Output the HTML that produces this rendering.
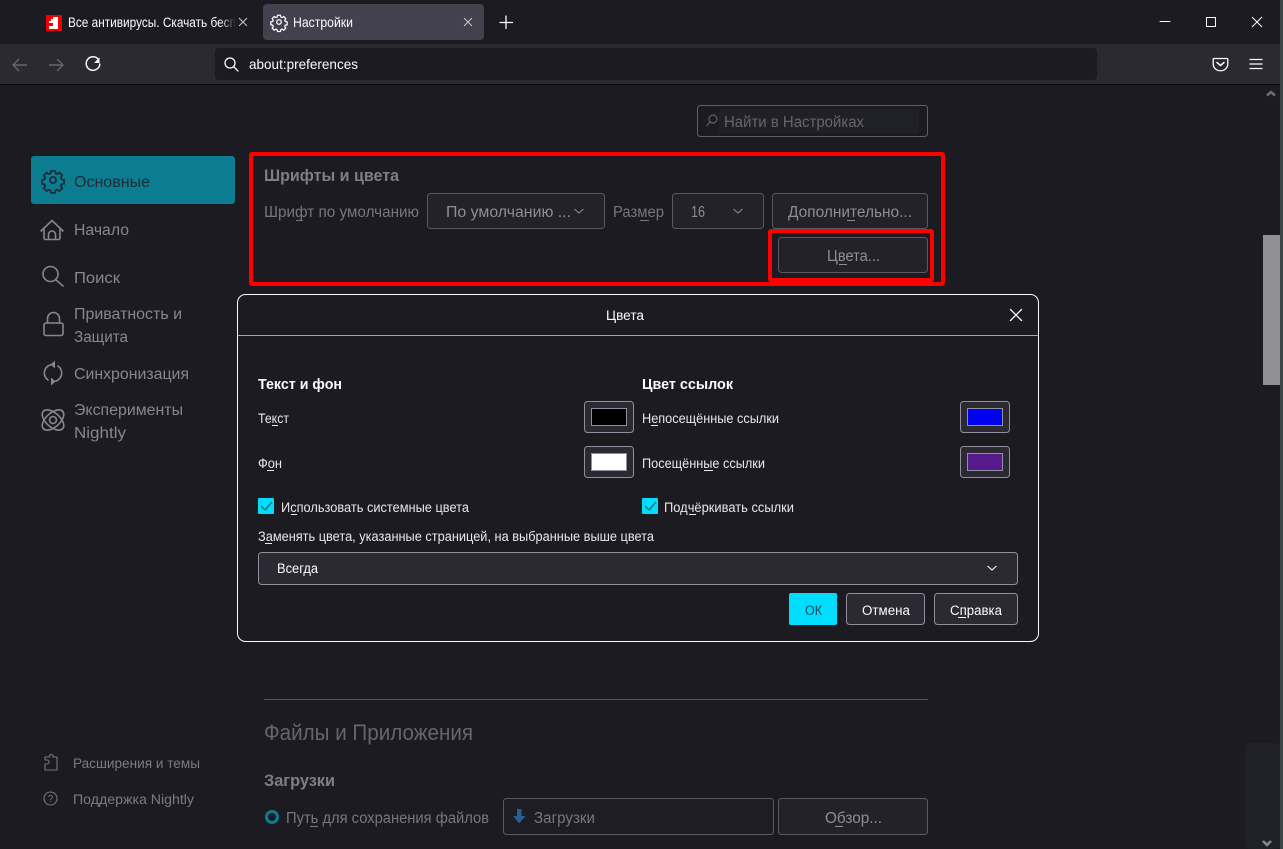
<!DOCTYPE html>
<html lang="ru"><head><meta charset="utf-8"><title>Настройки</title>
<style>
html,body{margin:0;padding:0;background:#1c1b22;width:1283px;height:849px;overflow:hidden}
svg{display:block}
text{font-family:"Liberation Sans","DejaVu Sans",sans-serif;font-size:13.5px;fill:#fbfbfe}
.side{font-size:15.5px;fill:#87878b}
.dim{font-size:15.5px;fill:#87878b}
.dlg{font-size:13.5px;fill:#e8e8ea}
.b{font-weight:bold}
.ic{fill:none;stroke:#87878b;stroke-width:1.6;stroke-linecap:round;stroke-linejoin:round}
.w{fill:none;stroke:#fbfbfe;stroke-width:1.3;stroke-linecap:round;stroke-linejoin:round}
</style></head><body>
<svg width="1283" height="849" viewBox="0 0 1283 849" xmlns="http://www.w3.org/2000/svg">
<defs>
<g id="gear"><path d="M-1.7-8h3.4l.5 2.2 1.4.6 2-1.2 2.4 2.4-1.2 2 .6 1.4 2.2.5v3.4l-2.2.5-.6 1.4 1.2 2-2.4 2.4-2-1.2-1.4.6-.5 2.2h-3.4l-.5-2.2-1.4-.6-2 1.2-2.4-2.4 1.2-2-.6-1.4-2.2-.5v-3.4l2.2-.5.6-1.4-1.2-2 2.4-2.4 2 1.2 1.4-.6z"/><circle r="2.7"/></g>
<linearGradient id="fade" x1="0" x2="1" y1="0" y2="0"><stop offset="0" stop-color="#1c1b22" stop-opacity="0"/><stop offset="1" stop-color="#1c1b22"/></linearGradient>
</defs>

<!-- page -->
<rect width="1283" height="849" fill="#1c1b22"/>
<rect x="1280" y="0" width="3" height="849" fill="#3c4646"/>

<!-- tabs -->
<rect x="46" y="15" width="16" height="16" fill="#f00000"/>
<path d="M53 17h5v12h-9v-3h4v-3h-4v-2h2v-2h2z" fill="#fff"/>
<text x="68" y="27" textLength="168" lengthAdjust="spacingAndGlyphs">Все антивирусы. Скачать бесп</text>
<rect x="220" y="12" width="16" height="20" fill="url(#fade)"/>
<path d="M239 18l8 8M247 18l-8 8" fill="none" stroke="#c8c8cc" stroke-width="1"/>
<rect x="263" y="4" width="221" height="36" rx="4" fill="#42414d"/>
<use href="#gear" fill="none" stroke="#fbfbfe" stroke-width="1.500" transform="translate(279 22) scale(.85)"/>
<text x="293" y="27" textLength="60" lengthAdjust="spacingAndGlyphs">Настройки</text>
<path d="M464 18l8 8M472 18l-8 8" fill="none" stroke="#c8c8cc" stroke-width="1"/>
<path d="M506 16v12.500M500 22.500h12.500" class="w" style="stroke-width:1.300"/>
<path d="M1160 21.500h10" class="w" style="stroke-width:1"/>
<rect x="1206.500" y="17.500" width="9" height="9" class="w" style="stroke-width:1"/>
<path d="M1252 17l10 10M1262 17l-10 10" fill="none" stroke="#fbfbfe" stroke-width="1"/>

<!-- toolbar -->
<rect x="0" y="44" width="1280" height="40" fill="#2b2a33"/>
<rect x="0" y="84" width="1280" height="1" fill="#0c0c0d"/>
<rect x="215" y="48" width="882" height="32" rx="4" fill="#1c1b22"/>
<path d="M13 65h14M19 59l-6 6 6 6" fill="none" stroke="#66666c" stroke-width="1.4"/>
<path d="M49 65h14M57 59l6 6-6 6" fill="none" stroke="#66666c" stroke-width="1.4"/>
<path d="M98.500 59.500a6.800 6.800 0 1 0 1.300 4.500" class="w" style="stroke-width:1.500"/>
<path d="M99.500 57.500v5.500h-5.500z" fill="#fbfbfe"/>
<circle cx="230" cy="63" r="5" class="w"/><path d="M234 67l4 4" class="w"/>
<text x="249" y="69" textLength="109" lengthAdjust="spacingAndGlyphs" style="font-size:14px">about:preferences</text>
<path d="M1214 58.500h13a.8.8 0 0 1 .8.8v4.700a7 6.500 0 0 1-14.600 0v-4.700a.8.8 0 0 1 .8-.8z" class="w"/>
<path d="M1217 62.500l3.500 3 3.500-3" class="w" style="stroke-width:1.500"/>
<path d="M1250 59.500h12M1250 64h12M1250 68.500h12" class="w"/>

<!-- scrollbar -->
<path d="M1267 95.500l4-3.500 4 3.500" fill="none" stroke="#6e6e72" stroke-width="2.500"/>
<rect x="1263" y="235" width="17" height="150" fill="#8f8f94"/>
<rect x="1245" y="743" width="35" height="106" rx="5" fill="#202027"/>
<path d="M1263 841l4 4 4-4" fill="none" stroke="#8a8a8e" stroke-width="2.500"/>

<!-- sidebar -->
<rect x="31" y="156" width="204" height="48" rx="3" fill="#0c7c91"/>
<use href="#gear" transform="translate(53 180) scale(1.150)" fill="none" stroke="#1c2a35" stroke-width="1.500"/>
<text x="74" y="187" textLength="76" lengthAdjust="spacingAndGlyphs" class="side" style="fill:#1c2b36">Основные</text>
<path d="M41 231l11-10.500 11 10.500M44 229v9a1.500 1.500 0 0 0 1.500 1.500h13a1.500 1.500 0 0 0 1.500-1.500v-9M48.500 239.500v-5a3.500 3.500 0 0 1 7 0v5" class="ic"/>
<text x="74" y="235" textLength="55" lengthAdjust="spacingAndGlyphs" class="side">Начало</text>
<circle cx="50.500" cy="274" r="7.500" class="ic"/><path d="M56 280l7 6" class="ic"/>
<text x="74" y="283" textLength="46" lengthAdjust="spacingAndGlyphs" class="side">Поиск</text>
<rect x="44" y="323" width="19" height="12.500" rx="2" class="ic"/><path d="M47.500 323v-4.500a6 6 0 0 1 12 0v4.500" class="ic"/>
<text x="74" y="319" textLength="108" lengthAdjust="spacingAndGlyphs" class="side">Приватность и</text>
<text x="74" y="342" textLength="54" lengthAdjust="spacingAndGlyphs" class="side">Защита</text>
<path d="M53 364.500a8.500 8.500 0 0 0-5 15.500M53 381.500a8.500 8.500 0 0 0 5-15.500" class="ic"/>
<path d="M55 360.500v8l-4.500-4zM51 385.500v-8l4.500 4z" fill="#87878b"/>
<text x="74" y="379" textLength="115" lengthAdjust="spacingAndGlyphs" class="side">Синхронизация</text>
<ellipse cx="53" cy="420" rx="13" ry="7" class="ic" transform="rotate(42 53 420)"/>
<ellipse cx="53" cy="420" rx="13" ry="7" class="ic" transform="rotate(-42 53 420)"/>
<circle cx="53" cy="420" r="3.500" class="ic"/>
<circle cx="63" cy="412" r="1" fill="#87878b"/>
<text x="74" y="415" textLength="109" lengthAdjust="spacingAndGlyphs" class="side">Эксперименты</text>
<text x="74" y="438" textLength="52" lengthAdjust="spacingAndGlyphs" class="side">Nightly</text>

<path d="M45 769v-5h2a2 2 0 1 0 0-4h-2v-3h4.500v-1.500a2 2 0 0 1 3.500 0v1.500h4v13h-12z" class="ic" style="stroke-width:1.100;stroke:#76767a"/>
<text x="73" y="768" textLength="127" lengthAdjust="spacingAndGlyphs" style="fill:#7c7c80">Расширения и темы</text>
<circle cx="50.500" cy="798.500" r="6.500" class="ic" style="stroke-width:1.100;stroke:#76767a"/>
<text x="50.500" y="802" text-anchor="middle" style="font-size:10px;fill:#76767a">?</text>
<text x="73" y="804" textLength="121" lengthAdjust="spacingAndGlyphs" style="fill:#7c7c80">Поддержка Nightly</text>

<!-- search -->
<rect x="697.500" y="105.500" width="230" height="31" rx="3" fill="#1c1b22" stroke="#606064"/>
<rect x="719" y="109" width="200" height="24" fill="#202027"/>
<circle cx="713" cy="119" r="4" fill="none" stroke="#606064" stroke-width="1.200"/><path d="M710 122l-3.500 4" stroke="#606064" stroke-width="1.200"/>
<text x="724" y="127" textLength="140" lengthAdjust="spacingAndGlyphs" style="font-size:15.500px;fill:#66666a">Найти в Настройках</text>

<!-- fonts section -->
<text x="264" y="181" textLength="135" lengthAdjust="spacingAndGlyphs" class="b" style="font-size:16.500px;fill:#7f7f83">Шрифты и цвета</text>
<text x="264" y="217" textLength="155" lengthAdjust="spacingAndGlyphs" class="dim" style="fill:#77777b">Шрифт по умолчанию</text>
<path d="M296 220.500h7" stroke="#77777b"/>
<rect x="427.500" y="193.500" width="177" height="35" rx="3" fill="#232229" stroke="#5a5a5e"/>
<text x="446" y="217" textLength="125" lengthAdjust="spacingAndGlyphs" class="dim" style="fill:#8e8e92">По умолчанию ...</text>
<path d="M574.500 209l4.500 4 4.500-4" fill="none" stroke="#88888c" stroke-width="1.100"/>
<text x="613" y="217" textLength="51" lengthAdjust="spacingAndGlyphs" class="dim" style="fill:#77777b">Размер</text>
<path d="M640 220.500h9" stroke="#77777b"/>
<rect x="672.500" y="193.500" width="91" height="35" rx="3" fill="#232229" stroke="#5a5a5e"/>
<text x="691" y="217" textLength="14" lengthAdjust="spacingAndGlyphs" class="dim" style="fill:#8e8e92">16</text>
<path d="M733.500 209l4.500 4 4.500-4" fill="none" stroke="#88888c" stroke-width="1.100"/>
<rect x="772.500" y="193.500" width="155" height="35" rx="3" fill="#232229" stroke="#5a5a5e"/>
<text x="788" y="217" textLength="124" lengthAdjust="spacingAndGlyphs" class="dim" style="fill:#8e8e92">Дополнительно...</text>
<path d="M847 220.500h8" stroke="#8e8e92"/>
<rect x="778.500" y="237.500" width="149" height="35" rx="3" fill="#232229" stroke="#5a5a5e"/>
<text x="827" y="261" textLength="53" lengthAdjust="spacingAndGlyphs" class="dim" style="fill:#8e8e92">Цвета...</text>
<path d="M839 264.500h8" stroke="#8e8e92"/>
<rect x="251" y="154" width="692" height="130" rx="1" fill="none" stroke="#ff0000" stroke-width="4"/>
<rect x="770" y="231" width="162" height="49" rx="1" fill="none" stroke="#ff0000" stroke-width="4"/>

<!-- dialog -->
<rect x="237.500" y="294.500" width="801" height="347" rx="8" fill="#1c1b22" stroke="#fbfbfe"/>
<path d="M238 335.500h800" stroke="#a6a6aa"/>
<text x="606" y="320" textLength="38" lengthAdjust="spacingAndGlyphs" style="font-size:13.500px">Цвета</text>
<path d="M1010.500 309.500l11 11M1021.500 309.500l-11 11" class="w"/>

<text x="258" y="389" textLength="84" lengthAdjust="spacingAndGlyphs" class="b" style="font-size:14.500px">Текст и фон</text>
<text x="642" y="389" textLength="91" lengthAdjust="spacingAndGlyphs" class="b" style="font-size:14.500px">Цвет ссылок</text>

<text x="258" y="423" textLength="31" lengthAdjust="spacingAndGlyphs" class="dlg">Текст</text><path d="M272 425.500h6" stroke="#e8e8ea"/>
<text x="258" y="468" textLength="24" lengthAdjust="spacingAndGlyphs" class="dlg">Фон</text><path d="M267 470.500h7" stroke="#e8e8ea"/>
<text x="642" y="423" textLength="137" lengthAdjust="spacingAndGlyphs" class="dlg">Непосещённые ссылки</text><path d="M651 425.500h7" stroke="#e8e8ea"/>
<text x="642" y="468" textLength="123" lengthAdjust="spacingAndGlyphs" class="dlg">Посещённые ссылки</text><path d="M704 470.500h9" stroke="#e8e8ea"/>

<rect x="584.500" y="401.500" width="49" height="31" rx="3" fill="#2b2a33" stroke="#8f8f9d"/>
<rect x="591.500" y="408.500" width="35" height="17" fill="#000" stroke="#8f8f9d"/>
<rect x="584.500" y="446.500" width="49" height="31" rx="3" fill="#2b2a33" stroke="#8f8f9d"/>
<rect x="591.500" y="453.500" width="35" height="17" fill="#fff" stroke="#8f8f9d"/>
<rect x="960.500" y="401.500" width="49" height="31" rx="3" fill="#2b2a33" stroke="#8f8f9d"/>
<rect x="967.500" y="408.500" width="35" height="17" fill="#0000ee" stroke="#8f8f9d"/>
<rect x="960.500" y="446.500" width="49" height="31" rx="3" fill="#2b2a33" stroke="#8f8f9d"/>
<rect x="967.500" y="453.500" width="35" height="17" fill="#551a8b" stroke="#8f8f9d"/>

<rect x="258" y="498" width="16" height="16" rx="1" fill="#00ddff"/>
<path d="M261 506l4 4 7-8" fill="none" stroke="#1c4a5a" stroke-width="1.100"/>
<text x="281" y="512" textLength="188" lengthAdjust="spacingAndGlyphs" class="dlg">Использовать системные цвета</text><path d="M291 514.500h6" stroke="#e8e8ea"/>
<rect x="642" y="498" width="16" height="16" rx="1" fill="#00ddff"/>
<path d="M645 506l4 4 7-8" fill="none" stroke="#1c4a5a" stroke-width="1.100"/>
<text x="664" y="512" textLength="130" lengthAdjust="spacingAndGlyphs" class="dlg">Подчёркивать ссылки</text><path d="M689 514.500h7" stroke="#e8e8ea"/>
<text x="258" y="541" textLength="396" lengthAdjust="spacingAndGlyphs" class="dlg">Заменять цвета, указанные страницей, на выбранные выше цвета</text><path d="M265 543.500h7" stroke="#e8e8ea"/>

<rect x="258.500" y="552.500" width="759" height="32" rx="3" fill="#2b2a33" stroke="#8f8f9d"/>
<text x="277" y="573" textLength="41" lengthAdjust="spacingAndGlyphs">Всегда</text>
<path d="M987.500 566l4.500 4 4.500-4" fill="none" stroke="#fbfbfe" stroke-width="1.100"/>

<rect x="789" y="593" width="48" height="32" rx="2" fill="#00ddff"/>
<text x="805" y="615" textLength="17" lengthAdjust="spacingAndGlyphs" style="fill:#0f4f5f">ОК</text>
<rect x="846.500" y="593.500" width="78" height="31" rx="3" fill="#2b2a33" stroke="#8f8f9d"/>
<text x="862" y="615" textLength="48" lengthAdjust="spacingAndGlyphs">Отмена</text>
<rect x="934.500" y="593.500" width="83" height="31" rx="3" fill="#2b2a33" stroke="#8f8f9d"/>
<text x="950" y="615" textLength="52" lengthAdjust="spacingAndGlyphs">Справка</text><path d="M958 617.500h8" stroke="#fbfbfe"/>

<!-- lower section -->
<path d="M264 699.500h664" stroke="#58585c"/>
<text x="264" y="740" textLength="209" lengthAdjust="spacingAndGlyphs" style="font-size:22px;fill:#66666a">Файлы и Приложения</text>
<text x="264" y="786" textLength="71" lengthAdjust="spacingAndGlyphs" class="b" style="font-size:16.500px;fill:#7f7f83">Загрузки</text>
<circle cx="272" cy="817" r="5.500" fill="#1c1b22" stroke="#0c7c91" stroke-width="3"/>
<text x="286" y="823" textLength="203" lengthAdjust="spacingAndGlyphs" class="dim" style="fill:#77777b">Путь для сохранения файлов</text><path d="M310 826.500h8" stroke="#77777b"/>
<rect x="503.500" y="798.500" width="270" height="36" rx="3" fill="#1e1d24" stroke="#5a5a5e"/>
<path d="M517 809h4.500v7h4l-6.300 7.500-6.200-7.500h4z" fill="#2a5f8f"/>
<text x="534" y="823" textLength="61" lengthAdjust="spacingAndGlyphs" class="dim" style="fill:#77777b">Загрузки</text>
<rect x="778.500" y="798.500" width="149" height="36" rx="3" fill="#232229" stroke="#5a5a5e"/>
<text x="825" y="823" textLength="57" lengthAdjust="spacingAndGlyphs" class="dim" style="fill:#8e8e92">Обзор...</text><path d="M835 826.500h8" stroke="#8e8e92"/>
</svg>
</body></html>
